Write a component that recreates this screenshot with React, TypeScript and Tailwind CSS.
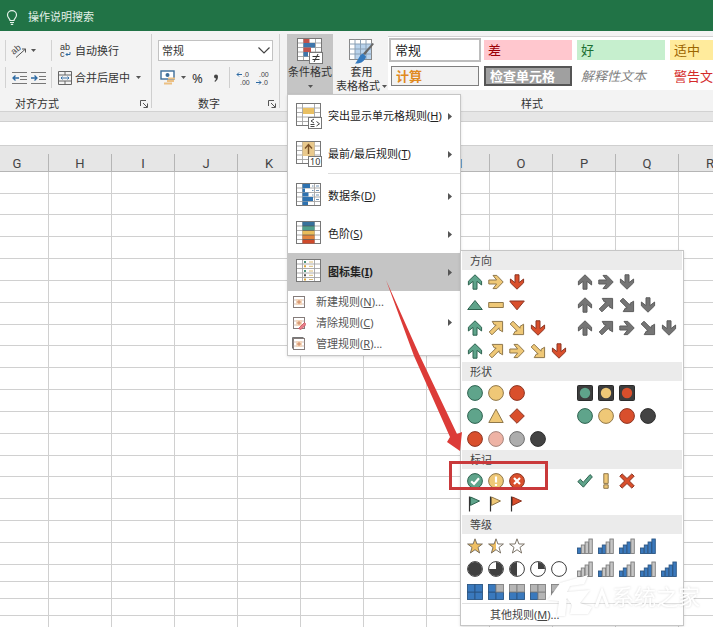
import { useState } from 'react';
import type { ReactNode } from 'react';

const GREEN = { fill: '#5fa48b', stroke: '#2f6350' };
const YELLOW = { fill: '#efc877', stroke: '#8f774a' };
const RED = { fill: '#d94f2c', stroke: '#8c3522' };
const GRAY = { fill: '#757575', stroke: '#5c5c5c' };
const PINK = { fill: '#eeb3a5', stroke: '#a5857c' };
const SILVER = { fill: '#adadad', stroke: '#6e6e6e' };
const BLACK = { fill: '#434343', stroke: '#2f2f2f' };

type Tone = typeof GREEN;

/* ---------- icon set glyphs, all 16x16 ---------- */

function Glyph({ children }: { children: ReactNode }) {
  return (
    <svg className="w-4 h-4 shrink-0" viewBox="0 0 16 16" fill="none" aria-hidden="true">
      {children}
    </svg>
  );
}

const STRAIGHT = 'M8 .8 14.6 7.2V11L10 7.4V15.2H6V7.4L1.4 11V7.2Z';
const DIAGONAL = 'M4.2 1.4H14.6V11.8L11 9.6V7.8L4 14.8 1.2 12 8.2 5H6.4Z';

// deg: 0 = up, 90 = right, 180 = down, odd multiples of 45 use the diagonal shape
function Arrow({ tone, deg }: { tone: Tone; deg: number }) {
  const diagonal = deg % 90 !== 0;
  return (
    <Glyph>
      <path
        d={diagonal ? DIAGONAL : STRAIGHT}
        transform={`rotate(${diagonal ? deg - 45 : deg} 8 8)`}
        {...tone}
      />
    </Glyph>
  );
}

function Dot({ tone }: { tone: Tone }) {
  return (
    <Glyph>
      <circle cx="8" cy="8" r="7.4" {...tone} />
    </Glyph>
  );
}

function Shape({ tone, d }: { tone: Tone; d: string }) {
  return (
    <Glyph>
      <path d={d} {...tone} />
    </Glyph>
  );
}

function Light({ tone }: { tone: Tone }) {
  return (
    <Glyph>
      <rect x=".5" y=".5" width="15" height="15" rx="1" fill="#3d3d3d" stroke="#2b2b2b" />
      <circle cx="8" cy="8" r="5.2" fill={tone.fill} />
    </Glyph>
  );
}

function Badge({ tone, d }: { tone: Tone; d: string }) {
  return (
    <Glyph>
      <circle cx="8" cy="8" r="7.4" {...tone} />
      <path d={d} stroke="#fff" strokeWidth="2.2" />
    </Glyph>
  );
}

function Flag({ tone }: { tone: Tone }) {
  return (
    <Glyph>
      <path d="M2.5.5V15.5" stroke="#333" strokeWidth="1.2" />
      <path d="M3.5 1 12.5 5 3.5 9.4Z" {...tone} />
    </Glyph>
  );
}

const STAR = 'M8 .8 9.9 6H15.4L11 9.4 12.6 15 8 11.7 3.4 15 5 9.4.6 6H6.1Z';

function Star({ part }: { part: 'full' | 'half' | 'none' }) {
  return (
    <Glyph>
      <path d={STAR} fill={part === 'full' ? '#efbf63' : '#fff'} />
      {part === 'half' && <path d="M8 .8V11.7L3.4 15 5 9.4.6 6H6.1Z" fill="#efbf63" />}
      <path d={STAR} stroke="#6f6759" strokeWidth=".9" />
    </Glyph>
  );
}

function Pie({ d }: { d?: string }) {
  return (
    <Glyph>
      <circle cx="8" cy="8" r="7.4" fill="#fff" stroke="#3d3d3d" />
      {d && <path d={d} fill="#404040" />}
    </Glyph>
  );
}

function Bars({ on }: { on: number }) {
  return (
    <Glyph>
      {[0, 1, 2, 3].map((i) => (
        <rect
          key={i}
          x={0.5 + i * 3.8}
          y={10 - i * 3}
          width="3.4"
          height={5.5 + i * 3}
          fill={i < on ? '#3a79bd' : '#c6c6c6'}
          stroke={i < on ? '#2b5583' : '#7d7d7d'}
          strokeWidth=".9"
        />
      ))}
    </Glyph>
  );
}

function Boxes({ on }: { on: number }) {
  // fill order: bottom left, bottom right, top left, top right
  const cells = [[0.5, 8], [8, 8], [0.5, 0.5], [8, 0.5]];
  return (
    <Glyph>
      {cells.map(([x, y], i) => (
        <rect
          key={i}
          x={x}
          y={y}
          width="7.5"
          height="7.5"
          fill={i < on ? '#3a79bd' : '#b5b5b5'}
          stroke={i < on ? '#2b5583' : '#808080'}
          strokeWidth=".9"
        />
      ))}
    </Glyph>
  );
}

const TICK = 'M4.2 8.2 7 11 12 5.2';
const CROSS = 'M5 5 11 11M11 5 5 11';
const FULL_PIE = 'M8 1A7 7 0 1 1 7.9 1Z';

const sections: { title: string; rows: { label: string; icons: ReactNode[] }[][] }[] = [
  {
    title: '方向',
    rows: [
      [
        { label: '三向箭头(彩色)', icons: [<Arrow tone={GREEN} deg={0} />, <Arrow tone={YELLOW} deg={90} />, <Arrow tone={RED} deg={180} />] },
        { label: '三向箭头(灰色)', icons: [<Arrow tone={GRAY} deg={0} />, <Arrow tone={GRAY} deg={90} />, <Arrow tone={GRAY} deg={180} />] },
      ],
      [
        {
          label: '3 个三角形',
          icons: [
            <Shape tone={GREEN} d="M8 3.5 15.3 12.5H.7Z" />,
            <Shape tone={YELLOW} d="M.7 5.5H15.3V10.5H.7Z" />,
            <Shape tone={RED} d="M.7 4H15.3L8 12.8Z" />,
          ],
        },
        { label: '四向箭头(灰色)', icons: [<Arrow tone={GRAY} deg={0} />, <Arrow tone={GRAY} deg={45} />, <Arrow tone={GRAY} deg={135} />, <Arrow tone={GRAY} deg={180} />] },
      ],
      [
        { label: '四向箭头(彩色)', icons: [<Arrow tone={GREEN} deg={0} />, <Arrow tone={YELLOW} deg={45} />, <Arrow tone={YELLOW} deg={135} />, <Arrow tone={RED} deg={180} />] },
        {
          label: '五向箭头(灰色)',
          icons: [<Arrow tone={GRAY} deg={0} />, <Arrow tone={GRAY} deg={45} />, <Arrow tone={GRAY} deg={90} />, <Arrow tone={GRAY} deg={135} />, <Arrow tone={GRAY} deg={180} />],
        },
      ],
      [
        {
          label: '五向箭头(彩色)',
          icons: [<Arrow tone={GREEN} deg={0} />, <Arrow tone={YELLOW} deg={45} />, <Arrow tone={YELLOW} deg={90} />, <Arrow tone={YELLOW} deg={135} />, <Arrow tone={RED} deg={180} />],
        },
      ],
    ],
  },
  {
    title: '形状',
    rows: [
      [
        { label: '三色交通灯(无边框)', icons: [<Dot tone={GREEN} />, <Dot tone={YELLOW} />, <Dot tone={RED} />] },
        { label: '三色交通灯(有边框)', icons: [<Light tone={GREEN} />, <Light tone={YELLOW} />, <Light tone={RED} />] },
      ],
      [
        { label: '三标志', icons: [<Dot tone={GREEN} />, <Shape tone={YELLOW} d="M8 1.2 15.2 14.5H.8Z" />, <Shape tone={RED} d="M8 .7 15.3 8 8 15.3.7 8Z" />] },
        { label: '四色交通灯', icons: [<Dot tone={GREEN} />, <Dot tone={YELLOW} />, <Dot tone={RED} />, <Dot tone={BLACK} />] },
      ],
      [{ label: '红-黑渐变', icons: [<Dot tone={RED} />, <Dot tone={PINK} />, <Dot tone={SILVER} />, <Dot tone={BLACK} />] }],
    ],
  },
  {
    title: '标记',
    rows: [
      [
        { label: '三个符号(有圆圈)', icons: [<Badge tone={GREEN} d={TICK} />, <Badge tone={YELLOW} d="M8 3.5V9.5M8 11V13" />, <Badge tone={RED} d={CROSS} />] },
        {
          label: '三个符号(无圆圈)',
          icons: [
            <Shape tone={GREEN} d="M.8 8.6 3.4 6.2 6.2 9.4 13 1.6 15.4 3.8 6.4 14.2Z" />,
            <Shape tone={YELLOW} d="M5.8.7H10.2V10.4H5.8ZM5.8 11.8H10.2V15.3H5.8Z" />,
            <Shape tone={RED} d="M3.2.9 8 5.5 12.8.9 15.2 3.2 10.4 8 15.2 12.8 12.8 15.1 8 10.5 3.2 15.1.8 12.8 5.6 8 .8 3.2Z" />,
          ],
        },
      ],
      [{ label: '三色旗', icons: [<Flag tone={GREEN} />, <Flag tone={YELLOW} />, <Flag tone={RED} />] }],
    ],
  },
  {
    title: '等级',
    rows: [
      [
        { label: '3 个星形', icons: [<Star part="full" />, <Star part="half" />, <Star part="none" />] },
        { label: '四等级', icons: [<Bars on={1} />, <Bars on={2} />, <Bars on={3} />, <Bars on={4} />] },
      ],
      [
        {
          label: '五象限图',
          icons: [<Pie d={FULL_PIE} />, <Pie d="M8 8V1A7 7 0 1 1 1 8Z" />, <Pie d="M8 1A7 7 0 0 0 8 15Z" />, <Pie d="M8 8V1A7 7 0 0 1 15 8Z" />, <Pie />],
        },
        { label: '五等级', icons: [<Bars on={0} />, <Bars on={1} />, <Bars on={2} />, <Bars on={3} />, <Bars on={4} />] },
      ],
      [{ label: '5 个框', icons: [<Boxes on={4} />, <Boxes on={3} />, <Boxes on={2} />, <Boxes on={1} />, <Boxes on={0} />] }],
    ],
  },
];

/* ---------- menu icons ---------- */

function Sheet({ children }: { children?: ReactNode }) {
  return (
    <svg className="w-[26px] h-[26px] shrink-0" viewBox="0 0 26 26" fill="none" aria-hidden="true">
      <rect x=".5" y=".5" width="24" height="22" fill="#fff" />
      <path d="M.5 5H24.5M.5 9.5H24.5M.5 14H24.5M.5 18.5H24.5M6.5.5V22.5M18.5.5V22.5" stroke="#a3a3a3" strokeWidth=".9" />
      <rect x=".5" y=".5" width="24" height="22" stroke="#777" />
      {children}
    </svg>
  );
}

const highlightIcon = (
  <Sheet>
    <path d="M7 5H18V11H7Z" fill="#e9c063" />
    <rect x="12.5" y="14.5" width="13" height="11" fill="#fff" stroke="#777" />
    <path d="M18 16 15 18 18 20M14.5 21.5H18.5M14.5 23.5H18.5M20.5 18.5 23.5 20.8 20.5 23" stroke="#444" />
  </Sheet>
);

const topIcon = (
  <Sheet>
    <path d="M6.5 1H18.5V15H6.5Z" fill="#e9c98c" />
    <path d="M12.5 13V3.5M9 7.5 12.5 3.5 16 7.5" stroke="#7a5227" strokeWidth="1.4" />
    <rect x="12.5" y="15.5" width="13" height="10" fill="#fff" stroke="#777" />
    <text x="14" y="24" fontSize="9" fill="#333" fontFamily="Noto Sans">10</text>
  </Sheet>
);

const dataBarIcon = (
  <Sheet>
    <path d="M6.5 1H14V5H6.5ZM6.5 9.5H12.5V13.5H6.5ZM6.5 14H17V18H6.5ZM6.5 18.5H12V22H6.5Z" fill="#2e72b0" />
    <path d="M6.5 5.5H9V9H6.5Z" fill="#2e72b0" />
    <path d="M16 3H17.5M16 7.5H17.5M16 12H17.5M20 3H23M20 7.5H23M20 12H23M20 16.5H23" stroke="#7193b5" />
  </Sheet>
);

const scaleIcon = (
  <Sheet>
    <path d="M6.5 1H18.5V5H6.5Z" fill="#37729c" />
    <path d="M6.5 5H18.5V9.5H6.5Z" fill="#4fa08d" />
    <path d="M6.5 9.5H18.5V14H6.5Z" fill="#e9bd5b" />
    <path d="M6.5 14H18.5V18.5H6.5Z" fill="#e3853d" />
    <path d="M6.5 18.5H18.5V22.5H6.5Z" fill="#cf4a2b" />
    <path d="M6.5 5H18.5M6.5 9.5H18.5M6.5 14H18.5M6.5 18.5H18.5" stroke="#555" strokeWidth=".7" />
  </Sheet>
);

const iconSetIcon = (
  <Sheet>
    <path d="M8 3H10M8 12H10" stroke="#4a9278" strokeWidth="2" />
    <path d="M8 7.3H10M8 20.5H10" stroke="#dba63b" strokeWidth="2" />
    <path d="M8 16.3H10" stroke="#555" strokeWidth="2" />
    <path d="M13 3H17M13 7.3H17M13 12H17M13 16.3H17M13 20.5H17" stroke="#d8bb74" />
  </Sheet>
);

function SmallSheet({ kind }: { kind: 'new' | 'clear' | 'manage' }) {
  return (
    <svg className="w-[14px] h-[14px] shrink-0" viewBox="0 0 14 14" fill="none" aria-hidden="true">
      {kind === 'manage' && <path d="M.5 11.5V.5H11.5" stroke="#777" />}
      <rect x="1.5" y="1.5" width="11" height="11" fill="#fff" stroke="#857c7a" />
      <path d="M1.5 5H12.5M1.5 9H12.5" stroke="#c9b1a8" strokeWidth=".8" />
      <rect x="4" y="4" width="6" height="6" fill="#f4d7bd" />
      <path d="M5 7H9M7 5V9" stroke="#c97a52" strokeWidth=".8" />
      {kind === 'clear' && <path d="M6.5 12.5 12.5 6.5 14 8.5 9 13.5Z" fill="#e9808a" stroke="#c8515f" strokeWidth=".8" />}
    </svg>
  );
}

/* ---------- ribbon pieces ---------- */

function Caret() {
  return (
    <svg className="w-[5px] h-[3px] shrink-0" viewBox="0 0 5 3" aria-hidden="true">
      <path d="M0 0H5L2.5 3Z" fill="#555" />
    </svg>
  );
}

function Launcher({ label }: { label: string }) {
  return (
    <button type="button" aria-label={label}>
      <svg className="w-2 h-2" viewBox="0 0 8 8" fill="none" stroke="#555">
        <path d="M.5 6V.5H6M3 3 7 7M7.5 3.5V7.5H3.5" />
      </svg>
    </button>
  );
}

function IndentIcon({ out }: { out?: boolean }) {
  return (
    <svg className="w-[15px] h-[14px]" viewBox="0 0 15 14" fill="none" aria-hidden="true">
      <path d="M0 1.5H15M8 5.5H15M8 8.5H15M0 12.5H15" stroke="#777" />
      <path d={out ? 'M7 7H1M3.5 4.5 1 7 3.5 9.5' : 'M0 7H6M3.5 4.5 6 7 3.5 9.5'} stroke="#2d6aa3" strokeWidth="1.3" />
    </svg>
  );
}

function DecimalIcon({ more }: { more?: boolean }) {
  return (
    <svg className="w-[14px] h-[14px] overflow-visible" viewBox="0 0 14 14" fill="none" aria-hidden="true">
      <g fontSize="7" fill="#444" fontFamily="Liberation Sans">
        <text x={more ? 7 : 4} y="6">{more ? '.0' : '.00'}</text>
        <text x={more ? 4 : 7} y="14">{more ? '.00' : '.0'}</text>
      </g>
      <path d={more ? 'M6 3.5H1M3 1.5 1 3.5 3 5.5' : 'M1 11.5H6M4 9.5 6 11.5 4 13.5'} stroke="#2d6aa3" />
    </svg>
  );
}

const cellStyles = [
  { label: '常规', className: 'bg-white text-[#222] ring-2 ring-[#bdbdbd]' },
  { label: '计算', className: 'bg-[#f2f2f2] text-[#e08a1e] font-bold border border-[#7f7f7f]' },
  { label: '差', className: 'bg-[#ffc7ce] text-[#9c0006]' },
  { label: '检查单元格', className: 'bg-[#a0a0a0] text-white font-bold border-2 border-[#555]' },
  { label: '好', className: 'bg-[#c6efce] text-[#1d7034]' },
  { label: '解释性文本', className: 'text-[#7f7f7f] italic' },
  { label: '适中', className: 'bg-[#ffeb9c] text-[#9c6500]' },
  { label: '警告文本', className: 'text-[#d42a2a]' },
];

const bigItems = [
  { label: '突出显示单元格规则', hotkey: 'H', icon: highlightIcon },
  { label: '最前/最后规则', hotkey: 'T', icon: topIcon },
  { label: '数据条', hotkey: 'D', icon: dataBarIcon },
  { label: '色阶', hotkey: 'S', icon: scaleIcon },
  { label: '图标集', hotkey: 'I', icon: iconSetIcon },
];

const smallItems = [
  { label: '新建规则', hotkey: 'N', kind: 'new', tail: '...' },
  { label: '清除规则', hotkey: 'C', kind: 'clear', tail: '' },
  { label: '管理规则', hotkey: 'R', kind: 'manage', tail: '...' },
] as const;

function Submark() {
  return (
    <svg className="w-1 h-[7px] ml-auto shrink-0" viewBox="0 0 4 7" aria-hidden="true">
      <path d="M0 0 4 3.5 0 7Z" fill="#555" />
    </svg>
  );
}

function IconSetMenu() {
  return (
    <div className="absolute left-full -top-[3px] z-20 w-[224px] bg-white border border-[#c6c6c6] px-px shadow-sm" role="menu">
      {sections.map((section) => (
        <section key={section.title}>
          <h3 className="h-[19px] leading-[19px] pl-2 bg-[#ebebeb] text-[#444]">{section.title}</h3>
          {section.rows.map((row, r) => (
            <div key={r} className="grid grid-cols-[110px_1fr] h-[23px] pl-[5px]">
              {row.map((set) => (
                <button key={set.label} type="button" aria-label={set.label} className="flex items-center gap-[5px]">
                  {set.icons.map((icon, i) => (
                    <span key={i}>{icon}</span>
                  ))}
                </button>
              ))}
            </div>
          ))}
        </section>
      ))}
      <button type="button" className="block w-full h-[22px] border-t border-[#e1e1e1] pl-7 text-left text-[#444]">
        其他规则(<u>M</u>)...
      </button>
    </div>
  );
}

function FormatMenu() {
  const [active, setActive] = useState('I');

  return (
    <div className="absolute left-0 top-full z-10 w-[174px] bg-white border border-[#c6c6c6] pt-[2px] pb-px shadow-sm" role="menu">
      {bigItems.map((item) => (
        <div
          key={item.hotkey}
          className={item.hotkey === 'T' ? 'relative mb-[3px]' : 'relative'}
        >
          <button
            type="button"
            onMouseEnter={() => setActive(item.hotkey)}
            className={
              active === item.hotkey
                ? 'flex items-center w-full h-[38px] pl-2 pr-2 bg-[#c5c5c5] text-[#222] font-bold'
                : 'flex items-center w-full h-[38px] pl-2 pr-2 text-[#222]'
            }
          >
            {item.icon}
            <span className="ml-[6px]">
              {item.label}(<u>{item.hotkey}</u>)
            </span>
            <Submark />
          </button>
          {item.hotkey === 'T' && <hr className="ml-10 border-[#dcdcdc]" />}
          {item.hotkey === 'I' && active === 'I' && <IconSetMenu />}
        </div>
      ))}
      {smallItems.map((item) => (
        <button key={item.hotkey} type="button" className="flex items-center w-full h-[21px] pl-1 pr-2 text-[#555]">
          <SmallSheet kind={item.kind} />
          <span className="ml-[10px]">
            {item.label}(<u>{item.hotkey}</u>){item.tail}
          </span>
          {item.kind === 'clear' && <Submark />}
        </button>
      ))}
    </div>
  );
}

function Ribbon() {
  return (
    <div className="flex pt-[3px] bg-[#f3f3f3] border-b border-[#d2d2d2] text-[#333]">
      {/* Alignment */}
      <div className="w-[151px] shrink-0 pt-[3px]">
        <div className="flex items-center h-[27px] pl-[5px]">
          <div className="flex items-center h-[21px] w-[46px] border-l border-[#d2d2d2] pl-[6px]">
            <button type="button" aria-label="方向" className="flex items-center gap-1">
              <svg className="w-[15px] h-[15px] overflow-visible" viewBox="0 0 15 15" fill="none">
                <text x="0" y="9" fontSize="9" fill="#444" fontFamily="Liberation Sans" transform="rotate(-40 5 8)">ab</text>
                <path d="M4 14.5 13.5 6M10 6H13.5V9.5" stroke="#555" />
              </svg>
              <Caret />
            </button>
          </div>
          <button type="button" className="flex items-center h-[21px] border-l border-[#d2d2d2] pl-[7px] gap-[3px]">
            <svg className="w-[13px] h-[15px] overflow-visible" viewBox="0 0 13 15" fill="none">
              <g fontSize="9" fill="#333" fontFamily="Liberation Sans">
                <text x="1" y="7">ab</text>
                <text x="1" y="14">c</text>
              </g>
              <path d="M11 9V11.5H7M8.5 10 7 11.5 8.5 13" stroke="#2d6aa3" />
            </svg>
            自动换行
          </button>
        </div>
        <div className="flex items-center h-[27px] pl-[5px]">
          <div className="flex items-center h-[21px] w-[46px] border-l border-[#d2d2d2] pl-[6px] gap-1">
            <button type="button" aria-label="减少缩进量"><IndentIcon out /></button>
            <button type="button" aria-label="增加缩进量"><IndentIcon /></button>
          </div>
          <button type="button" className="flex items-center h-[21px] border-l border-[#d2d2d2] pl-[6px] gap-[3px]">
            <svg className="w-[14px] h-[14px]" viewBox="0 0 14 14" fill="none">
              <path d="M.5.5H13.5V13.5H.5ZM.5 4H13.5M.5 10H13.5M7 .5V4M7 10V13.5" stroke="#666" />
              <path d="M3 7H11M4.5 5.5 3 7 4.5 8.5M9.5 5.5 11 7 9.5 8.5" stroke="#2d6aa3" strokeWidth=".9" />
            </svg>
            合并后居中
            <span className="ml-[3px]"><Caret /></span>
          </button>
        </div>
        <div className="flex items-center justify-between h-[14px] mt-[6px] pl-[15px] pr-[3px]">
          对齐方式
          <Launcher label="对齐设置" />
        </div>
      </div>
      <div className="w-px h-[74px] bg-[#cfcfcf]" />

      {/* Number */}
      <div className="w-[127px] shrink-0 pt-[3px]">
        <div className="flex items-center h-[27px] pl-[6px]">
          <div className="relative w-[115px]">
            <select aria-label="数字格式" className="appearance-none w-full h-[21px] pl-[3px] bg-white border border-[#c2c2c2]">
              <option>常规</option>
            </select>
            <svg className="absolute right-[3px] top-[7px] w-3 h-[7px] pointer-events-none" viewBox="0 0 12 7" fill="none">
              <path d="M.5.5 6 6 11.5.5" stroke="#444" strokeWidth="1.2" />
            </svg>
          </div>
        </div>
        <div className="flex items-center h-[27px] pl-2">
          <button type="button" aria-label="会计数字格式" className="flex items-center gap-[5px]">
            <svg className="w-4 h-[15px]" viewBox="0 0 16 15" fill="none">
              <rect x="1" y="1" width="13" height="8" fill="#fff" stroke="#3c6d99" strokeWidth="1.4" />
              <circle cx="7.5" cy="5" r="2" fill="#3c6d99" />
              <path d="M8 7.5H15V9.5H8ZM7 10H14V12H7ZM4 12.5H12V14.5H4Z" fill="#ecc083" />
            </svg>
            <Caret />
          </button>
          <button type="button" aria-label="百分比样式" className="ml-[6px] text-[13px]">%</button>
          <button type="button" aria-label="千位分隔样式" className="ml-[10px]">
            <svg className="w-[6px] h-2" viewBox="0 0 6 8">
              <path d="M1 2.5A2 2 0 0 1 5 2.5C5 5 4 6.5 2 8L1.5 7C2.5 6 3 5.3 3 4.5A2 2 0 0 1 1 2.5Z" fill="#444" />
            </svg>
          </button>
          <div className="ml-[10px] w-px h-[21px] bg-[#cfcfcf]" />
          <button type="button" aria-label="增加小数位数" className="ml-[6px]"><DecimalIcon more /></button>
          <button type="button" aria-label="减少小数位数" className="ml-[5px]"><DecimalIcon /></button>
        </div>
        <div className="flex items-center justify-between h-[14px] mt-[6px] pl-[46px] pr-[3px]">
          数字
          <Launcher label="数字设置" />
        </div>
      </div>
      <div className="w-px h-[74px] bg-[#cfcfcf]" />

      {/* Styles */}
      <div className="flex-1 min-w-0">
        <div className="flex h-[60px] pl-[7px]">
          <div className="relative w-[46px] shrink-0">
            <button type="button" className="flex flex-col items-center w-full h-[60px] pt-1 bg-[#c5c5c5]">
              <Sheet>
                <path d="M6.5 1H12.5V5H6.5Z" fill="#c0524b" />
                <path d="M6.5 5H18V9.5H6.5Z" fill="#3f76ab" />
                <path d="M6.5 9.5H14V14H6.5Z" fill="#c0524b" />
                <path d="M6.5 14H11V18.5H6.5Z" fill="#3f76ab" />
                <rect x="12.5" y="14.5" width="13" height="11" fill="#fff" stroke="#777" />
                <path d="M15.5 18.5H22.5M15.5 21.5H22.5M21 16 17 24" stroke="#333" />
              </Sheet>
              <span className="leading-[16px] whitespace-nowrap">条件格式</span>
              <span className="mt-[5px]"><Caret /></span>
            </button>
            <FormatMenu />
          </div>
          <button type="button" className="flex flex-col items-center w-[55px] shrink-0 pt-[5px] pl-[2px]">
            <svg className="w-[26px] h-[26px]" viewBox="0 0 26 26" fill="none">
              <rect x=".5" y=".5" width="22" height="20" fill="#fff" stroke="#888" />
              <path d="M6 5H22V20H6Z" fill="#b9d3ec" />
              <path d="M.5 5H22.5M.5 10H22.5M.5 15H22.5M6 .5V20.5M11.5.5V20.5M17 .5V20.5" stroke="#8aa0b5" />
              <path d="M25 5 16 16 14 14.5 23.5 4Z" fill="#666" />
              <path d="M14 14.5 17 17.5C16 22 12 25 6 24.5 9 22 10 16 14 14.5Z" fill="#3479bd" />
            </svg>
            <span className="leading-[14px]">套用</span>
            <span className="flex items-center gap-[2px] leading-[14px] whitespace-nowrap">
              表格格式
              <Caret />
            </span>
          </button>
          <div className="grid grid-flow-col grid-rows-[20px_20px] auto-cols-[88px] gap-x-[5px] gap-y-[6px] flex-1 min-w-0 overflow-hidden mt-[2px] mb-1 pt-[3px] pl-[3px] bg-white border-t border-[#d2d2d2]">
            {cellStyles.map((s) => (
              <button key={s.label} type="button" className={`flex items-center px-1 text-[13px] whitespace-nowrap ${s.className}`}>
                {s.label}
              </button>
            ))}
          </div>
        </div>
        <div className="h-[14px] mt-[3px] pl-[241px]">样式</div>
      </div>
    </div>
  );
}

const columns = 'GHIJKLMNOPQRSTUVWXYZ'.split('');
const rowCount = 22;

function rowHeight(i: number) {
  if (i > 17) return 'h-[17px]';
  return i % 6 === 1 ? 'h-[21px]' : 'h-[22px]';
}

function Grid() {
  return (
    <div className="flex-1 min-h-0 overflow-hidden bg-white">
      <table className="-ml-[14px] w-max table-fixed border-separate border-spacing-0">
        <thead>
          <tr>
            {columns.map((c) => (
              <th key={c} className="p-0 pt-2 bg-[#e6e6e6] border-b border-[#b5b5b5] font-['Roboto',sans-serif] font-normal text-[13px] text-[#444]">
                <span className="block w-[63px] h-[17px] leading-[19px] border-r border-[#b5b5b5]">{c}</span>
              </th>
            ))}
          </tr>
        </thead>
        <tbody>
          {Array.from({ length: rowCount }, (_, i) => (
            <tr key={i} className={rowHeight(i)}>
              {columns.map((c) => (
                <td key={c} className="p-0 border-r border-b border-[#d0d0d0]" />
              ))}
            </tr>
          ))}
        </tbody>
      </table>
    </div>
  );
}

function Watermark() {
  return (
    <div className="absolute left-[540px] top-[571px] z-30 flex items-center pointer-events-none drop-shadow-[0_0_1px_rgba(0,0,0,0.15)]">
      <svg className="w-[72px] h-[50px]" viewBox="0 0 72 50" fill="none" aria-hidden="true">
        <path d="M8 29 20 12 48 4 44 13 30 15 27 21 50 19 40 32 52 36 48 43H30L32 34 27 27 25 45H17L19 30Z" fill="#fff" />
        <path d="M56 36 62 20 68 36" stroke="#fff" strokeWidth="3" />
      </svg>
      <span className="text-[22px] leading-none text-white whitespace-nowrap">系统之家</span>
    </div>
  );
}

export default function App() {
  return (
    <div className="relative flex flex-col h-screen overflow-hidden bg-[#e6e6e6] font-['Noto_Sans','Noto_Sans_CJK_SC',sans-serif] text-[11px] leading-[14px]">
      <header className="flex items-center h-[31px] shrink-0 pl-[6px] pt-[3px] gap-[10px] bg-[#217346] text-[#e4f1e9]">
        <svg className="w-3 h-[15px]" viewBox="0 0 12 15" fill="none" stroke="currentColor" strokeWidth="1.2" aria-hidden="true">
          <path d="M4 10.5C4 8.5 1.5 8 1.5 5A4.5 4.3 0 0 1 10.5 5C10.5 8 8 8.5 8 10.5ZM4 12.5H8M4.8 14.3H7.2" />
        </svg>
        操作说明搜索
      </header>
      <Ribbon />
      <div className="h-[10px] shrink-0 border-b border-[#cfcfcf]" />
      <input aria-label="编辑栏" className="block w-full h-[24px] shrink-0 px-2 bg-white border-b border-[#cfcfcf] outline-none" />
      <Grid />

      {/* Callout: arrow from the menu item to the boxed icon set */}
      <svg className="absolute left-[385px] top-[279px] z-10 w-[80px] h-[174px] pointer-events-none" viewBox="0 0 80 174" aria-hidden="true">
        <path d="M1 1 34 75 72 155 77 153 75 172 62 163 65 158 29 77Z" fill="#dc3b38" />
      </svg>
      <div className="absolute left-[449px] top-[461px] z-30 w-[99px] h-[29px] border-[3px] border-[#c9393b] pointer-events-none" />
      <Watermark />
    </div>
  );
}
